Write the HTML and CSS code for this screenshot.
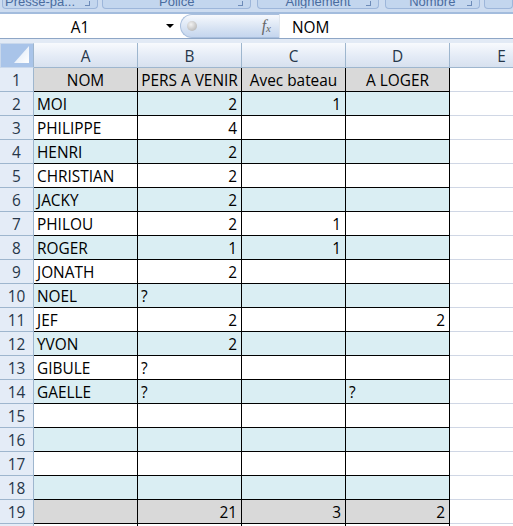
FILE: index.html
```html
<!DOCTYPE html>
<html lang="fr">
<head>
    <meta charset="UTF-8">
    <title>Classeur - Feuil1</title>
    <link rel="stylesheet" href="styles.css">
</head>
<body>

<!-- Bottom edge of the ribbon (group labels) -->
<div class="ribbon">
    <div class="group g-clip">Presse-pa...<span class="launcher"></span></div>
    <div class="group g-font">Police<span class="launcher"></span></div>
    <div class="group g-align">Alignement<span class="launcher"></span></div>
    <div class="group g-num">Nombre<span class="launcher"></span></div>
    <div class="group g-rest"></div>
</div>

<!-- Formula bar -->
<div class="formula-bar">
    <div class="name-box">
        <span class="ref">A1</span>
        <span class="arrow"></span>
    </div>
    <div class="fx-pill">
        <span class="knob"></span>
        <span class="fx">f<sub>x</sub></span>
    </div>
    <div class="formula">NOM</div>
</div>
<div class="bar-gap"></div>

<!-- Sheet -->
<div class="sheet">
    <div class="row">
        <div class="corner">
            <svg width="16" height="18" viewBox="0 0 16 18">
                <defs>
                    <linearGradient id="tri" x1="0" y1="0" x2="1" y2="1">
                        <stop offset="0" stop-color="#d9e6f7"/>
                        <stop offset="1" stop-color="#ffffff"/>
                    </linearGradient>
                </defs>
                <polygon points="15,0 15,17 0,17" fill="url(#tri)"/>
            </svg>
        </div>
        <div class="ch">A</div>
        <div class="ch">B</div>
        <div class="ch">C</div>
        <div class="ch">D</div>
        <div class="ch">E</div>
    </div>

    <div class="row gray">
        <div class="rh">1</div>
        <div class="c ctr">NOM</div>
        <div class="c ctr">PERS A VENIR</div>
        <div class="c ctr">Avec bateau</div>
        <div class="c ctr">A LOGER</div>
        <div class="e"></div>
    </div>
    <div class="row blue">
        <div class="rh">2</div>
        <div class="c">MOI</div>
        <div class="c num">2</div>
        <div class="c num">1</div>
        <div class="c"></div>
        <div class="e"></div>
    </div>
    <div class="row">
        <div class="rh">3</div>
        <div class="c">PHILIPPE</div>
        <div class="c num">4</div>
        <div class="c"></div>
        <div class="c"></div>
        <div class="e"></div>
    </div>
    <div class="row blue">
        <div class="rh">4</div>
        <div class="c">HENRI</div>
        <div class="c num">2</div>
        <div class="c"></div>
        <div class="c"></div>
        <div class="e"></div>
    </div>
    <div class="row">
        <div class="rh">5</div>
        <div class="c">CHRISTIAN</div>
        <div class="c num">2</div>
        <div class="c"></div>
        <div class="c"></div>
        <div class="e"></div>
    </div>
    <div class="row blue">
        <div class="rh">6</div>
        <div class="c">JACKY</div>
        <div class="c num">2</div>
        <div class="c"></div>
        <div class="c"></div>
        <div class="e"></div>
    </div>
    <div class="row">
        <div class="rh">7</div>
        <div class="c">PHILOU</div>
        <div class="c num">2</div>
        <div class="c num">1</div>
        <div class="c"></div>
        <div class="e"></div>
    </div>
    <div class="row blue">
        <div class="rh">8</div>
        <div class="c">ROGER</div>
        <div class="c num">1</div>
        <div class="c num">1</div>
        <div class="c"></div>
        <div class="e"></div>
    </div>
    <div class="row">
        <div class="rh">9</div>
        <div class="c">JONATH</div>
        <div class="c num">2</div>
        <div class="c"></div>
        <div class="c"></div>
        <div class="e"></div>
    </div>
    <div class="row blue">
        <div class="rh">10</div>
        <div class="c">NOEL</div>
        <div class="c">?</div>
        <div class="c"></div>
        <div class="c"></div>
        <div class="e"></div>
    </div>
    <div class="row">
        <div class="rh">11</div>
        <div class="c">JEF</div>
        <div class="c num">2</div>
        <div class="c"></div>
        <div class="c num">2</div>
        <div class="e"></div>
    </div>
    <div class="row blue">
        <div class="rh">12</div>
        <div class="c">YVON</div>
        <div class="c num">2</div>
        <div class="c"></div>
        <div class="c"></div>
        <div class="e"></div>
    </div>
    <div class="row">
        <div class="rh">13</div>
        <div class="c">GIBULE</div>
        <div class="c">?</div>
        <div class="c"></div>
        <div class="c"></div>
        <div class="e"></div>
    </div>
    <div class="row blue">
        <div class="rh">14</div>
        <div class="c">GAELLE</div>
        <div class="c">?</div>
        <div class="c"></div>
        <div class="c">?</div>
        <div class="e"></div>
    </div>
    <div class="row">
        <div class="rh">15</div>
        <div class="c"></div>
        <div class="c"></div>
        <div class="c"></div>
        <div class="c"></div>
        <div class="e"></div>
    </div>
    <div class="row blue">
        <div class="rh">16</div>
        <div class="c"></div>
        <div class="c"></div>
        <div class="c"></div>
        <div class="c"></div>
        <div class="e"></div>
    </div>
    <div class="row">
        <div class="rh">17</div>
        <div class="c"></div>
        <div class="c"></div>
        <div class="c"></div>
        <div class="c"></div>
        <div class="e"></div>
    </div>
    <div class="row blue">
        <div class="rh">18</div>
        <div class="c"></div>
        <div class="c"></div>
        <div class="c"></div>
        <div class="c"></div>
        <div class="e"></div>
    </div>
    <div class="row gray">
        <div class="rh">19</div>
        <div class="c"></div>
        <div class="c num">21</div>
        <div class="c num">3</div>
        <div class="c num">2</div>
        <div class="e"></div>
    </div>
    <div class="row">
        <div class="rh"></div>
        <div class="c"></div>
        <div class="c"></div>
        <div class="c"></div>
        <div class="c"></div>
        <div class="e"></div>
    </div>
</div>

</body>
</html>
```

FILE: styles.css
```css
/* Basic Reset */
* {
    margin: 0;
    padding: 0;
    box-sizing: border-box;
}
body {
    width: 513px;
    height: 526px;
    overflow: hidden;
    font-family: 'Open Sans', 'Liberation Sans', Arial, sans-serif;
    font-size: 15.4px;
    color: #000;
    background: #fff;
}

/* Ribbon group labels (only their bottom edge shows) */
.ribbon {
    height: 14px;
    background: #cddcf0;
    display: flex;
    align-items: flex-start;
    overflow: hidden;
    border-bottom: 2px solid #a3bcdd;
}
.group {
    position: relative;
    height: 9px;
    margin-left: 4px;
    background: #c3d6ee;
    border: 1px solid #9db6da;
    border-top: none;
    border-radius: 0 0 4px 4px;
    color: #4a6c9f;
    font-family: 'Liberation Sans', Arial, sans-serif;
    font-size: 13px;
    line-height: 4px;
    text-align: center;
    overflow: hidden;
}
.g-clip { width: 99px; margin-left: 2px; text-indent: -20px; }
.g-font { width: 154px; }
.g-align { width: 125px; margin-left: 6px; }
.g-num { width: 98px; margin-left: 6px; }
.g-rest { width: 30px; }
.launcher {
    position: absolute;
    right: 7px;
    top: 1px;
    width: 5px;
    height: 5px;
    border-right: 1px solid #6d8bb8;
    border-bottom: 1px solid #6d8bb8;
}

/* Formula bar */
.formula-bar {
    display: flex;
    height: 25px;
    background: #fff;
    border-bottom: 1px solid #8ea6c6;
}
.name-box {
    width: 180px;
    display: flex;
    align-items: center;
    padding-top: 2px;
}
.name-box .ref {
    width: 160px;
    text-align: center;
}
.name-box .arrow {
    margin-left: 6px;
    margin-top: -2px;
    width: 0;
    height: 0;
    border-left: 4px solid transparent;
    border-right: 4px solid transparent;
    border-top: 4px solid #000;
}
.fx-pill {
    width: 99px;
    height: 24px;
    display: flex;
    align-items: center;
    justify-content: space-between;
    padding: 0 8px 0 6px;
    background: linear-gradient(#f7f9fd, #d7e3f3 60%, #c5d6ee);
    border: 1px solid #a9bfdd;
    border-right: none;
    border-radius: 12px 0 0 12px;
}
.knob {
    width: 10px;
    height: 10px;
    border-radius: 50%;
    background: radial-gradient(circle at 40% 35%, #f2f2f2, #a9a9a9);
}
.fx {
    font-family: 'Liberation Serif', 'Times New Roman', serif;
    font-style: italic;
    font-size: 16px;
    color: #666;
}
.fx sub {
    font-size: 11px;
    vertical-align: -1px;
}
.formula {
    flex: 1;
    display: flex;
    align-items: center;
    padding: 2px 0 0 12px;
    border-left: 1px solid #e0e6ee;
}
.bar-gap {
    height: 4px;
    background: #e2eaf5;
}

/* Sheet grid */
.sheet {
    display: grid;
    grid-template-columns: 34px repeat(5, 104px);
    grid-template-rows: 25px;
    grid-auto-rows: 24px;
    line-height: 23px;
}
.row {
    display: contents;
}
.corner {
    background: #a9c4e9;
    border: 1px solid #c9d8ec;
    border-right: 1px solid #9eb6ce;
    display: flex;
    justify-content: flex-end;
    align-items: flex-end;
    padding: 0 3px 3px 0;
}
.ch {
    background: linear-gradient(#f8fafd, #e4ebf6 55%, #d7e1ef);
    border-right: 1px solid #9eb6ce;
    border-bottom: 1px solid #9eb6ce;
    text-align: center;
    color: #27374a;
    line-height: 25px;
    padding-top: 1px;
}
.rh {
    background: #e4ecf7;
    border-right: 1px solid #9eb6ce;
    border-bottom: 1px solid #9eb6ce;
    text-align: center;
    color: #27374a;
    padding-top: 1px;
}
.c {
    border-right: 1px solid #000;
    border-bottom: 1px solid #000;
    padding: 1px 4px 0 3px;
    white-space: nowrap;
    overflow: hidden;
}
.e {
    border-bottom: 1px solid #d0d7e5;
}
.blue .c { background: #daeef3; }
.gray .c { background: #d9d9d9; }
.num { text-align: right; }
.ctr { text-align: center; padding: 1px 0 0; }
```
